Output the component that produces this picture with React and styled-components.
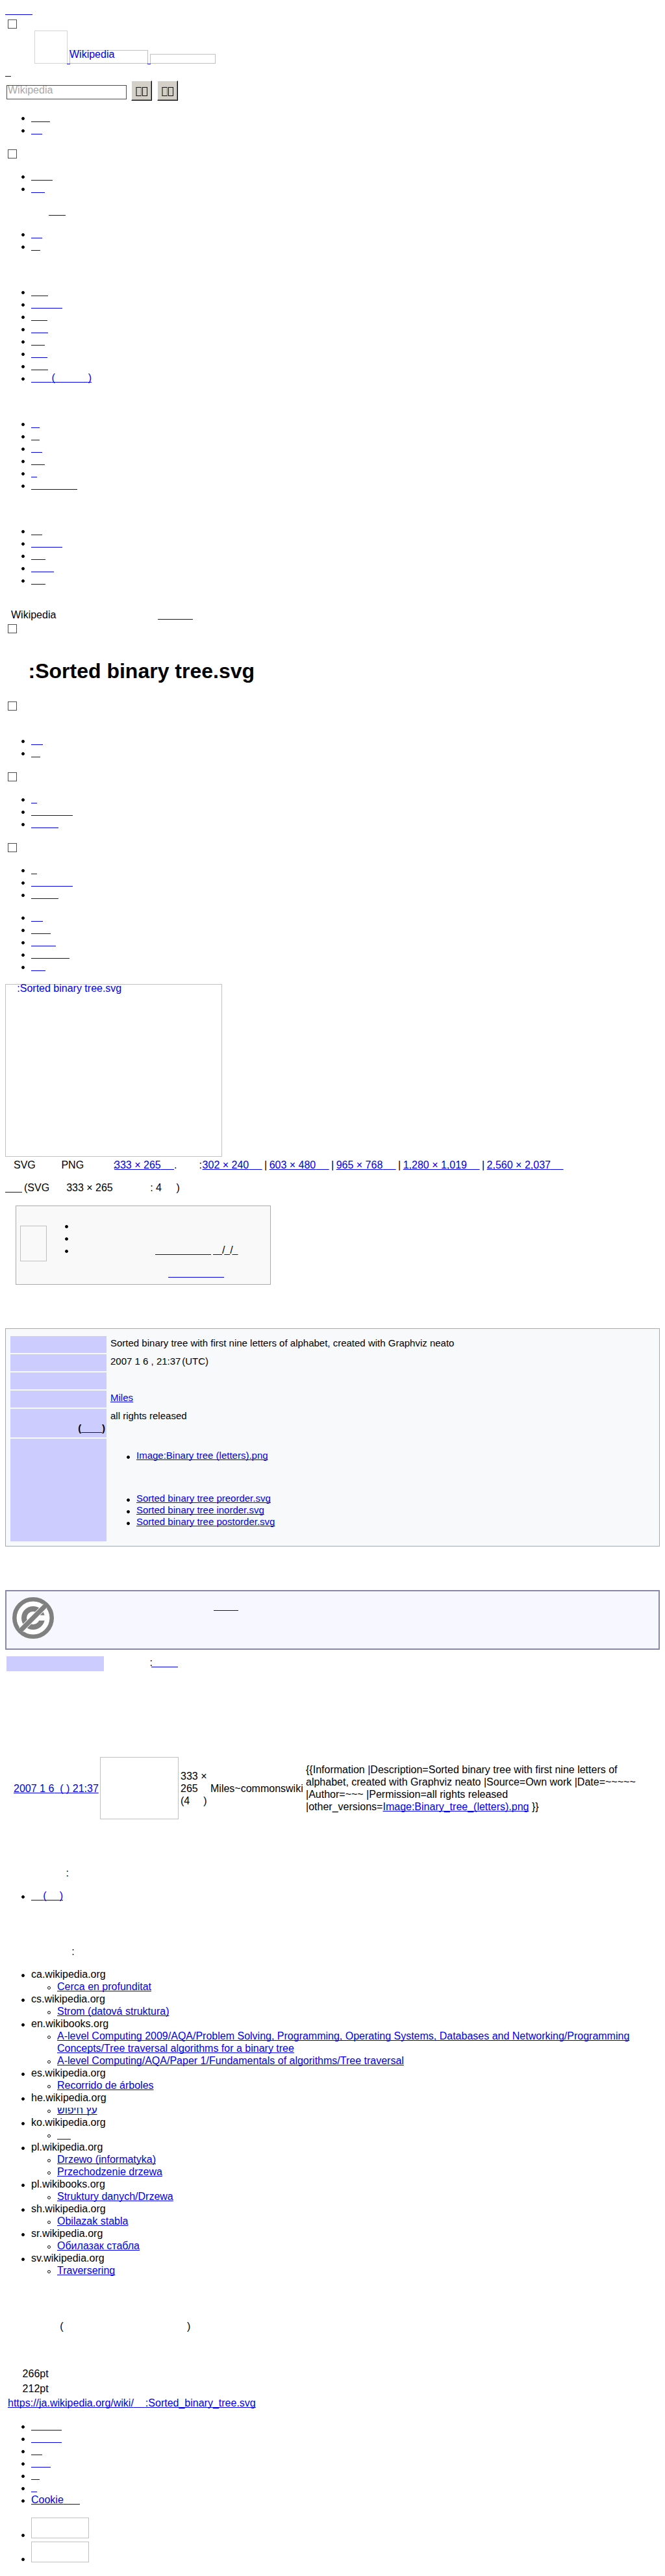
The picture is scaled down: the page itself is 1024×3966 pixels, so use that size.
import React from "react";
import styled, { createGlobalStyle, css } from "styled-components";

const Base = createGlobalStyle`
  body {
    margin: 0;
    background: #fff;
    color: #000;
    font: 16px/19px "Liberation Sans", Arial, sans-serif;
  }
`;

const Page = styled.div`
  box-sizing: border-box;
  width: 1024px;
  height: 3966px;
  padding: 6px 8px 0;
  display: flow-root;
`;

const Line = styled.div`
  margin-top: ${(p) => p.$mt || 0}px;
  height: 19px;
  white-space: pre;
`;

const A = styled.a`
  color: #0000ee;
  text-decoration: underline;
  text-decoration-thickness: 1px;
  text-underline-offset: 1px;
  text-decoration-skip-ink: none;
  cursor: pointer;
`;

const Space = styled.span`
  white-space: pre;
  letter-spacing: ${(p) => (p.$w - 4.45).toFixed(2)}px;
`;

const Tight = styled.span`
  letter-spacing: ${(p) => p.$by}px;
`;

const Separator = styled.span`
  display: inline-block;
  width: 11px;
  text-align: center;
`;

const Checkbox = styled.div`
  box-sizing: border-box;
  width: 14px;
  height: 14px;
  margin: ${(p) => p.$mt}px 0 0 4px;
  border: 1px solid #4c4c4c;
`;

const Frame = styled.div`
  box-sizing: border-box;
  flex: none;
  width: ${(p) => p.$w}px;
  height: ${(p) => p.$h}px;
  border: 1px solid ${(p) => p.$tone || "#c0c0c0"};
  color: #0000ee;
  line-height: 17px;
  white-space: pre;
`;

const AltText = styled.div`
  margin: -3px 0 0 -1px;
`;

const Header = styled.div`
  display: flex;
  align-items: flex-end;
  height: 51px;
  margin-top: 3px;
  padding-left: 45px;
`;

const Tick = styled.div`
  width: 5px;
  height: 1px;
  margin: 0 -1px -1px;
  background: #0000ee;
  z-index: 1;
`;

const SearchRow = styled.div`
  display: flex;
  align-items: flex-start;
  height: 31px;
  margin-top: 4px;
  padding-left: 2px;
`;

const SearchBox = styled.div`
  box-sizing: border-box;
  width: 185px;
  height: 22px;
  margin: 7px 7px 0 0;
  padding-left: 1px;
  border: 1px solid #4c4c4c;
  color: #a9a9a9;
  line-height: 17px;
`;

const Placeholder = styled.div`
  margin-top: -2px;
`;

const Button = styled.div`
  box-sizing: border-box;
  display: flex;
  gap: 1px;
  width: 32px;
  height: 31px;
  margin-right: 8px;
  padding: 9px 0 0 6px;
  background: #d4d0c8;
  border: solid;
  border-width: 1px;
  border-color: #fff #000 #000 #fff;
  box-shadow: inset -1px -1px 0 #808080;
`;

const Glyph = styled.div`
  box-sizing: border-box;
  width: ${(p) => (p.$heavy ? 9 : 8)}px;
  height: 14px;
  border: 1px solid #111;
  ${(p) =>
    p.$heavy &&
    css`
      border-left: 2px solid #6a6a66;
      border-right-color: #6a6a66;
    `}
`;

const List = styled.ul`
  list-style: none;
  padding: 0;
  margin: ${(p) => p.$mt || 0}px 0 0;
  line-height: ${(p) => p.$pitch || 19}px;
`;

const Item = styled.li`
  display: flex;
  align-items: flex-start;
  white-space: ${(p) => (p.$wrap ? "normal" : "pre")};
  &::before {
    content: "";
    box-sizing: border-box;
    flex: none;
    width: 5px;
    height: 5px;
    border: 1px solid #000;
    border-radius: 50%;
    background: ${(p) => (p.$hollow ? "transparent" : "#000")};
    margin: ${(p) => p.$drop || 8.5}px 10.5px 0 24.5px;
  }
`;

const ItemBody = styled.div`
  flex: 1;
`;

const Title = styled.h1`
  margin: 40px 0 0;
  height: 36px;
  font-size: 32px;
  line-height: 36px;
  padding-left: 35.5px;
`;

const Notice = styled.div`
  box-sizing: border-box;
  display: flex;
  width: 393px;
  height: 122px;
  margin: 18px 0 0 16px;
  border: 1px solid #aaa;
  background: #f9f9f9;
`;

const NoticeIcon = styled.div`
  padding: 30px 3px 0 6px;
`;

const NoticeText = styled.div`
  padding-top: 20px;
`;

const InfoTable = styled.div`
  box-sizing: border-box;
  display: grid;
  grid-template-columns: 148px 1fr;
  grid-template-rows: 26px 26px 26px 26px 44px 158px;
  gap: 2px 6px;
  height: 336px;
  margin-top: 67px;
  padding: 11px 7px 7px;
  border: 1px solid #a2a9b1;
  background: #f8f9fa;
  font-size: 15px;
`;

const Label = styled.div`
  background: #ccccff;
  font-weight: bold;
  text-align: right;
  padding: 21px 2px 0 0;
  line-height: 17px;
  white-space: pre;
`;

const Value = styled.div`
  line-height: 17px;
  padding-top: 2px;
  white-space: pre;
`;

const License = styled.div`
  box-sizing: border-box;
  display: flex;
  height: 92px;
  margin-top: 67px;
  padding: 9px;
  border: 2px solid #8888aa;
  background: #f7f8ff;
`;

const LicenseText = styled.div`
  padding: 4px 0 0 246px;
`;

const Stamp = styled.div`
  display: flex;
  height: 23px;
  margin: 10px 0 0 2px;
`;

const StampLabel = styled.div`
  width: 150px;
  background: #ccccff;
`;

const StampText = styled.div`
  padding-left: 70.6px;
`;

const History = styled.div`
  display: flex;
  align-items: center;
  height: 97px;
  margin-top: 132px;
  padding-left: 13px;
  white-space: pre;
`;

const Cell = styled.div`
  width: ${(p) => p.$w}px;
  flex: none;
  margin-bottom: ${(p) => p.$lift || 0}px;
`;

const Meta = styled.div`
  padding-left: ${(p) => p.$indent}px;
  height: ${(p) => p.$h}px;
  margin-top: ${(p) => p.$mt || 0}px;
  white-space: pre;
`;

const Clipped = styled(A)`
  display: inline-block;
  vertical-align: top;
  clip-path: inset(6px 0 0 0);
`;

const NB = "\u00a0";
const Gap = ({ w }) => <Space $w={w}>{NB}</Space>;
const Blank = ({ w }) => (
  <A>
    <Gap w={w} />
  </A>
);

const BlankList = ({ mt, widths, children }) => (
  <List $mt={mt}>
    {widths.map((w, i) => (
      <Item key={i}>
        <Blank w={w} />
      </Item>
    ))}
    {children}
  </List>
);

const usage = [
  ["ca.wikipedia.org", ["Cerca en profunditat"]],
  ["cs.wikipedia.org", ["Strom (datová struktura)"]],
  [
    "en.wikibooks.org",
    [
      "A-level Computing 2009/AQA/Problem Solving, Programming, Operating Systems, Databases and Networking/Programming Concepts/Tree traversal algorithms for a binary tree",
      "A-level Computing/AQA/Paper 1/Fundamentals of algorithms/Tree traversal",
    ],
  ],
  ["es.wikipedia.org", ["Recorrido de árboles"]],
  ["he.wikipedia.org", ["עץ חיפוש"]],
  ["ko.wikipedia.org", [""]],
  ["pl.wikipedia.org", ["Drzewo (informatyka)", "Przechodzenie drzewa"]],
  ["pl.wikibooks.org", ["Struktury danych/Drzewa"]],
  ["sh.wikipedia.org", ["Obilazak stabla"]],
  ["sr.wikipedia.org", ["Обилазак стабла"]],
  ["sv.wikipedia.org", ["Traversering"]],
];

const UsageLink = ({ site, text }) => {
  if (!text) return <Blank w={21} />;
  if (site.startsWith("he.")) return <Clipped>{text}</Clipped>;
  return <A>{text}</A>;
};

const sizes = [
  ["302 × 240", 20.4],
  ["603 × 480", 20.4],
  ["965 × 768", 20.4],
  ["1,280 × 1,019", 19.6],
  ["2,560 × 2,037", 19.6],
];

const PublicDomainIcon = () => (
  <svg width="64" height="64" viewBox="0 0 64 64">
    <circle cx="32" cy="32" r="28.7" fill="#fff" stroke="#808080" strokeWidth="6.6" />
    <circle cx="32" cy="32" r="14" fill="none" stroke="#808080" strokeWidth="8" />
    <rect x="40" y="27.8" width="11" height="8.2" fill="#fff" />
    <path d="M13.5 50.5 L50.5 13.5" stroke="#fff" strokeWidth="9" />
    <path d="M11 53 L53 11" stroke="#808080" strokeWidth="7.4" />
  </svg>
);

const ToolButton = () => (
  <Button>
    <Glyph $heavy />
    <Glyph />
  </Button>
);

export default function App() {
  return (
    <>
      <Base />
      <Page>
        <Line>
          <Blank w={42} />
        </Line>
        <Checkbox $mt={5} />
        <Header>
          <Frame $w={51} $h={51} $tone="#d3d3d3" />
          <Tick />
          <Frame $w={121} $h={21}>
            <AltText>Wikipedia</AltText>
          </Frame>
          <Tick />
          <Frame $w={101} $h={15} />
        </Header>
        <Line $mt={3}>
          <Blank w={9} />
        </Line>
        <SearchRow>
          <SearchBox>
            <Placeholder>Wikipedia</Placeholder>
          </SearchBox>
          <ToolButton />
          <ToolButton />
        </SearchRow>
        <BlankList mt={16} widths={[29, 17]} />
        <Checkbox $mt={21} />
        <BlankList mt={17} widths={[33, 21]} />
        <Line $mt={16}>
          <Gap w={67} />
          <Blank w={26} />
        </Line>
        <BlankList mt={16} widths={[17, 14]} />
        <BlankList mt={51} widths={[26, 48, 25, 26, 21, 25, 26]}>
          <Item>
            <A>
              <Gap w={31.5} />(<Gap w={50.8} />)
            </A>
          </Item>
        </BlankList>
        <BlankList mt={51} widths={[13, 13, 17, 21, 9, 71]} />
        <BlankList mt={51} widths={[17, 48, 22, 35, 22]} />
        <Line $mt={35}>
          <Gap w={9} />
          Wikipedia
          <Gap w={156.6} />
          <Blank w={54} />
        </Line>
        <Checkbox $mt={5} />
        <Title>:Sorted binary tree.svg</Title>
        <Checkbox $mt={29} />
        <BlankList mt={36} widths={[18, 14]} />
        <Checkbox $mt={21} />
        <BlankList mt={17} widths={[9, 64, 42]} />
        <Checkbox $mt={21} />
        <BlankList mt={17} widths={[9, 64, 42]} />
        <BlankList mt={16} widths={[18, 30, 38, 59, 22]} />

        <Meta $indent={0} $mt={18} $h={266}>
          <Frame $w={334} $h={266}>
            <AltText>
              <Gap w={18.3} />
              :Sorted binary tree.svg
            </AltText>
          </Frame>
        </Meta>
        <Line $mt={3}>
          <Gap w={13} />
          SVG
          <Gap w={39.6} />
          PNG
          <Gap w={45.1} />
          <Tight $by={-2.6}>:</Tight>
          <A>
            333 × 265
            <Gap w={20.4} />
          </A>
          <Tight $by={-0.6}>.</Tight>
          <Gap w={34.5} />
          <Tight $by={0.7}>:</Tight>
          {sizes.map(([text, w], i) => (
            <React.Fragment key={text}>
              {i > 0 && <Separator>|</Separator>}
              <A>
                {text}
                <Gap w={w} />
              </A>
            </React.Fragment>
          ))}
        </Line>
        <Line $mt={16}>
          <Blank w={26} />
          <Gap w={3} />
          (SVG
          <Gap w={26} />
          333 × 265
          <Gap w={57.4} />: 4<Gap w={22.5} />)
        </Line>

        <Notice>
          <NoticeIcon>
            <Frame $w={41} $h={55} />
          </NoticeIcon>
          <NoticeText>
            <List>
              <Item>{NB}</Item>
              <Item>{NB}</Item>
              <Item>
                <Gap w={124} />
                <Blank w={86} />
                <Gap w={3} />
                <Blank w={14} />
                <Tight $by={-1.2}>/</Tight>
                <Blank w={9} />
                <Tight $by={-1.2}>/</Tight>
                <Blank w={9} />
              </Item>
            </List>
            <Line $mt={16}>
              <Gap w={184} />
              <Blank w={86} />
            </Line>
          </NoticeText>
        </Notice>

        <InfoTable>
          <Label />
          <Value>
            Sorted binary tree with first nine letters of alphabet, created with Graphviz neato
          </Value>
          <Label />
          <Value>
            2007 1 6 , 21:37
            <Gap w={2} />
            (UTC)
          </Value>
          <Label />
          <Value />
          <Label />
          <Value>
            <A>Miles</A>
          </Value>
          <Label>
            (<Blank w={32} />)
          </Label>
          <Value>all rights released</Value>
          <Label />
          <Value>
            <List $mt={15} $pitch={18}>
              <Item>
                <A>Image:Binary tree (letters).png</A>
              </Item>
            </List>
            <List $mt={48} $pitch={18}>
              {["preorder", "inorder", "postorder"].map((order) => (
                <Item key={order}>
                  <A>Sorted binary tree {order}.svg</A>
                </Item>
              ))}
            </List>
          </Value>
        </InfoTable>

        <License>
          <PublicDomainIcon />
          <LicenseText>
            <Blank w={38} />
          </LicenseText>
        </License>
        <Stamp>
          <StampLabel />
          <StampText>
            <Tight $by={-2}>:</Tight>
            <Blank w={41} />
          </StampText>
        </Stamp>

        <History>
          <Cell $w={133}>
            <A>
              2007 1 6
              <Gap w={8.9} />( ) 21:37
            </A>
          </Cell>
          <Cell $w={124} $lift={1}>
            <Frame $w={121} $h={96} />
          </Cell>
          <Cell $w={46}>
            333 ×<br />
            265
            <br />
            (4
            <Gap w={21} />)
          </Cell>
          <Cell $w={147}>Miles~commonswiki</Cell>
          <Cell $w={520} $lift={1}>
            {"{{Information |Description=Sorted binary tree with first nine letters of"}
            <br />
            alphabet, created with Graphviz neato |Source=Own work |Date=~~~~~
            <br />
            |Author=~~~ |Permission=all rights released
            <br />
            |other_versions=<A>Image:Binary_tree_(letters).png</A>
            {" }}"}
          </Cell>
        </History>

        <Line $mt={72}>
          <Gap w={93.6} />:
        </Line>
        <List $mt={16}>
          <Item>
            <A>
              <Gap w={18.3} />(<Gap w={20} />)
            </A>
          </Item>
        </List>
        <Line $mt={67}>
          <Gap w={102.2} />:
        </Line>
        <List $mt={16}>
          {usage.map(([site, links]) => (
            <Item key={site} $wrap>
              <ItemBody>
                {site}
                <List>
                  {links.map((text) => (
                    <Item key={text} $wrap $hollow>
                      <ItemBody>
                        <UsageLink site={site} text={text} />
                      </ItemBody>
                    </Item>
                  ))}
                </List>
              </ItemBody>
            </Item>
          ))}
        </List>

        <Line $mt={67}>
          <Gap w={84.3} />(<Gap w={190.4} />)
        </Line>
        <Meta $indent={26.6} $mt={54} $h={23}>
          266pt
        </Meta>
        <Meta $indent={26.6} $h={22}>
          212pt
        </Meta>
        <Meta $indent={4} $h={19}>
          <A>
            https://ja.wikipedia.org/wiki/
            <Gap w={18} />
            :Sorted_binary_tree.svg
          </A>
        </Meta>
        <BlankList mt={16} widths={[47, 47, 17, 30, 13, 9]}>
          <Item>
            <A>
              Cookie
              <Gap w={25.2} />
            </A>
          </Item>
        </BlankList>
        <List $mt={18}>
          {[0, 1].map((n) => (
            <Item key={n} $drop={24.5}>
              <Meta $indent={0} $h={37}>
                <Frame $w={89} $h={32} />
              </Meta>
            </Item>
          ))}
        </List>
      </Page>
    </>
  );
}
